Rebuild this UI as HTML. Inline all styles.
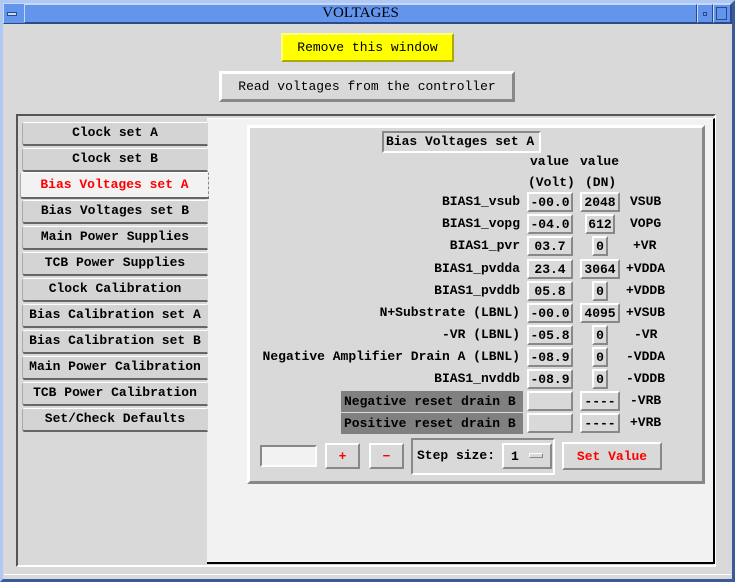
<!DOCTYPE html>
<html><head><meta charset="utf-8"><style>
*{margin:0;padding:0;box-sizing:border-box}
body{width:735px;height:582px;background:#d9d9d9;position:relative;overflow:hidden;font-family:"Liberation Mono",monospace;font-size:13px;color:#000;font-weight:bold}
.a{position:absolute}
.r{position:absolute;background:#d9d9d9;border:2px solid;border-color:#fff #888 #888 #fff;display:flex;align-items:center;justify-content:center;white-space:nowrap}
.s{position:absolute;border:2px solid;border-color:#888 #fff #fff #888}
.t{position:absolute;white-space:nowrap;line-height:16px}
.tab{position:absolute;left:22px;width:186px;height:24px;background:#d4d4d4;border:1px solid;border-color:#fff #d4d4d4 #666 #aaa;border-bottom-width:2px;border-radius:3px 0 0 3px;text-align:center;line-height:20px;font-weight:bold;font-size:13px}
.lbl{position:absolute;right:215px;white-space:nowrap;line-height:16px}
</style></head><body>
<div class="a" style="left:0;top:0;width:735px;height:582px;border:3px solid #7b9fe0;border-color:#b0c8f4 #3a5a9a #3a5a9a #b0c8f4"></div>
<div class="a" style="left:3px;top:3px;width:729px;height:21px;background:#6495ed;border:1px solid;border-color:#c8d8f8 #2a4a8a #2a4a8a #c8d8f8"></div>
<div class="a" style="left:24px;top:4px;width:673px;height:19px;border:1px solid;border-color:#c8d8f8 #2a4a8a #2a4a8a #c8d8f8;text-align:center;font-family:'Liberation Serif',serif;font-size:15px;line-height:17px;font-weight:normal">VOLTAGES</div>
<div class="a" style="left:7px;top:12px;width:10px;height:4px;border:1px solid #2a4a8a;background:#c8d8f8"></div>
<div class="a" style="left:697px;top:4px;width:16px;height:19px;border:1px solid;border-color:#c8d8f8 #2a4a8a #2a4a8a #c8d8f8"></div>
<div class="a" style="left:703px;top:12px;width:4px;height:4px;border:1px solid #2a4a8a"></div>
<div class="a" style="left:713px;top:4px;width:18px;height:19px;border:1px solid;border-color:#c8d8f8 #2a4a8a #2a4a8a #c8d8f8"></div>
<div class="a" style="left:716px;top:7px;width:11px;height:13px;border:1px solid #2a4a8a"></div>
<div class="a" style="left:4px;top:574px;width:727px;height:4px;background:#d9d9d9;border-top:1px solid #fff"></div>

<div class="r" style="left:281px;top:33px;width:173px;height:29px;background:#ffff00;border-color:#ffff80 #aaaa00 #aaaa00 #ffff80;font-weight:normal">Remove this window</div>
<div class="r" style="left:219px;top:71px;width:296px;height:31px;border-width:3px;font-weight:normal">Read voltages from the controller</div>

<div class="a" style="left:16px;top:114px;width:700px;height:453px;border:2px solid;border-color:#555 #fff #fff #555"></div>
<div class="a" style="left:207px;top:118px;width:508px;height:446px;background:#f2f2f2;border-right:2px solid #000;border-bottom:2px solid #000;border-top:1px solid #fff"></div>
<div class="tab" style="top:122px">Clock set A</div>
<div class="tab" style="top:148px">Clock set B</div>
<div class="tab" style="top:172px;left:20px;width:189px;height:27px;background:#f2f2f2;color:#f00;line-height:24px;border-right:1px dashed #888">Bias Voltages set A</div>
<div class="tab" style="top:200px">Bias Voltages set B</div>
<div class="tab" style="top:226px">Main Power Supplies</div>
<div class="tab" style="top:252px">TCB Power Supplies</div>
<div class="tab" style="top:278px">Clock Calibration</div>
<div class="tab" style="top:304px">Bias Calibration set A</div>
<div class="tab" style="top:330px">Bias Calibration set B</div>
<div class="tab" style="top:356px">Main Power Calibration</div>
<div class="tab" style="top:382px">TCB Power Calibration</div>
<div class="tab" style="top:408px">Set/Check Defaults</div>

<div class="a" style="left:247px;top:125px;width:458px;height:359px;background:#d9d9d9;border:3px solid;border-color:#fff #888 #888 #fff"></div>
<div class="a" style="left:382px;top:131px;width:159px;height:22px;background:#fff;border:2px solid;border-color:#888 #fff #fff #888"></div>
<div class="a" style="left:384px;top:133px;width:155px;height:18px;background:#d9d9d9;line-height:17px;padding-left:2px">Bias Voltages set A</div>

<div class="t" style="left:530px;top:154px">value</div>
<div class="t" style="left:580px;top:154px">value</div>
<div class="t" style="left:528px;top:175px">(Volt)</div>
<div class="t" style="left:585px;top:175px">(DN)</div>

<div class="lbl" style="top:194px">BIAS1_vsub</div>
<div class="lbl" style="top:216px">BIAS1_vopg</div>
<div class="lbl" style="top:238px">BIAS1_pvr</div>
<div class="lbl" style="top:261px">BIAS1_pvdda</div>
<div class="lbl" style="top:283px">BIAS1_pvddb</div>
<div class="lbl" style="top:305px">N+Substrate (LBNL)</div>
<div class="lbl" style="top:327px">-VR (LBNL)</div>
<div class="lbl" style="top:349px">Negative Amplifier Drain A (LBNL)</div>
<div class="lbl" style="top:371px">BIAS1_nvddb</div>
<div class="a" style="left:341px;top:391px;width:182px;height:21px;background:#808080;line-height:21px;padding-left:3px">Negative reset drain B</div>
<div class="a" style="left:341px;top:413px;width:182px;height:21px;background:#808080;line-height:21px;padding-left:3px">Positive reset drain B</div>

<div class="r" style="left:527px;top:192px;width:46px;height:20px">-00.0</div>
<div class="r" style="left:527px;top:214px;width:46px;height:20px">-04.0</div>
<div class="r" style="left:527px;top:236px;width:46px;height:20px">03.7</div>
<div class="r" style="left:527px;top:259px;width:46px;height:20px">23.4</div>
<div class="r" style="left:527px;top:281px;width:46px;height:20px">05.8</div>
<div class="r" style="left:527px;top:303px;width:46px;height:20px">-00.0</div>
<div class="r" style="left:527px;top:325px;width:46px;height:20px">-05.8</div>
<div class="r" style="left:527px;top:347px;width:46px;height:20px">-08.9</div>
<div class="r" style="left:527px;top:369px;width:46px;height:20px">-08.9</div>
<div class="r" style="left:527px;top:391px;width:46px;height:20px"></div>
<div class="r" style="left:527px;top:413px;width:46px;height:20px"></div>

<div class="r" style="left:580px;top:192px;width:40px;height:20px">2048</div>
<div class="r" style="left:585px;top:214px;width:30px;height:20px">612</div>
<div class="r" style="left:592px;top:236px;width:16px;height:20px">0</div>
<div class="r" style="left:580px;top:259px;width:40px;height:20px">3064</div>
<div class="r" style="left:592px;top:281px;width:16px;height:20px">0</div>
<div class="r" style="left:580px;top:303px;width:40px;height:20px">4095</div>
<div class="r" style="left:592px;top:325px;width:16px;height:20px">0</div>
<div class="r" style="left:592px;top:347px;width:16px;height:20px">0</div>
<div class="r" style="left:592px;top:369px;width:16px;height:20px">0</div>
<div class="r" style="left:580px;top:391px;width:40px;height:20px">----</div>
<div class="r" style="left:580px;top:413px;width:40px;height:20px">----</div>

<div class="t" style="left:630px;top:194px">VSUB</div>
<div class="t" style="left:630px;top:216px">VOPG</div>
<div class="t" style="left:633px;top:238px">+VR</div>
<div class="t" style="left:626px;top:261px">+VDDA</div>
<div class="t" style="left:626px;top:283px">+VDDB</div>
<div class="t" style="left:626px;top:305px">+VSUB</div>
<div class="t" style="left:634px;top:327px">-VR</div>
<div class="t" style="left:626px;top:349px">-VDDA</div>
<div class="t" style="left:626px;top:371px">-VDDB</div>
<div class="t" style="left:630px;top:393px">-VRB</div>
<div class="t" style="left:630px;top:415px">+VRB</div>

<div class="s" style="left:260px;top:445px;width:57px;height:22px;background:#f2f2f2;border-color:#888 #fff #fff #888"></div>
<div class="r" style="left:325px;top:443px;width:35px;height:26px;color:#f00">+</div>
<div class="r" style="left:369px;top:443px;width:35px;height:26px;color:#f00">−</div>
<div class="a" style="left:411px;top:438px;width:144px;height:37px;border:2px solid;border-color:#888 #fff #fff #888"></div>
<div class="t" style="left:417px;top:448px">Step size:</div>
<div class="r" style="left:502px;top:443px;width:50px;height:26px;justify-content:flex-start;padding-left:7px">1</div>
<div class="a" style="left:529px;top:453px;width:14px;height:5px;background:#d9d9d9;border:1px solid;border-color:#fff #888 #888 #fff"></div>
<div class="r" style="left:562px;top:442px;width:100px;height:28px;color:#f00">Set Value</div>
</body></html>
